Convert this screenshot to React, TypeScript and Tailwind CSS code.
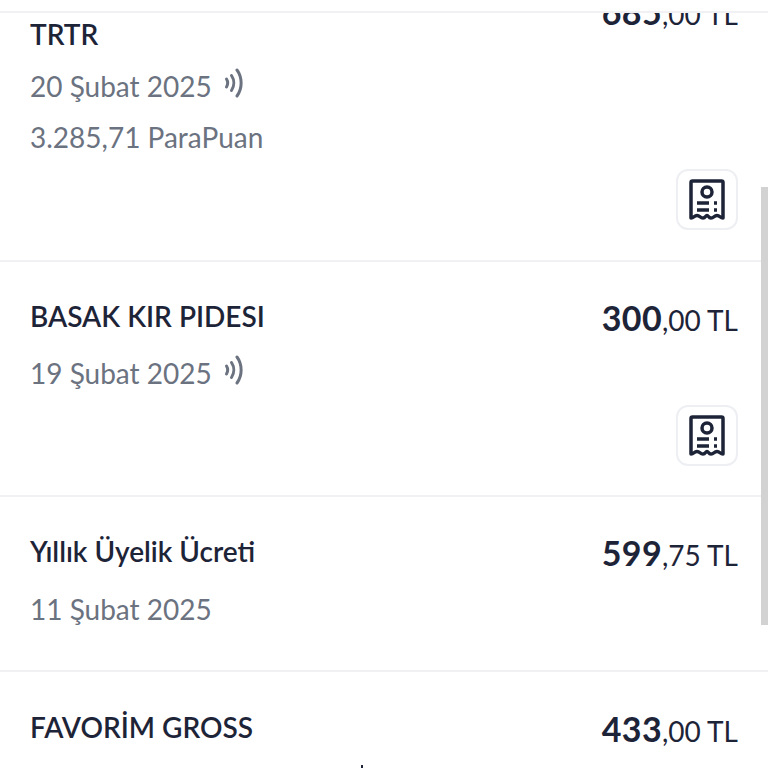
const fontStack = { fontFamily: '"Lato", "Noto Sans", sans-serif' };

function ReceiptIcon() {
  return (
    <svg width="36" height="42" viewBox="0 0 36 42" fill="none" stroke="#1e2438" strokeWidth="3.500">
      <path d="M2 39V3.500A1.500 1.500 0 0 1 3.500 2H32.500A1.500 1.500 0 0 1 34 3.500V39C31 39 31 36.500 28 36.500C25 36.500 25 39 22 39C19.500 39 19.500 36.500 18 36.500C16.500 36.500 16.500 39 14 39C11 39 11 36.500 8 36.500C5 36.500 5 39 2 39Z" strokeLinejoin="round" />
      <circle cx="18" cy="13" r="5" />
      <path d="M8 24H20M25 24H28M8 31H20M25 31H28" />
    </svg>
  );
}

function ContactlessIcon() {
  return (
    <svg width="20" height="30" viewBox="0 0 20 30" fill="none" stroke="#6b7280" strokeWidth="3" strokeLinecap="round">
      <path d="M2.500 11C4 13.500 4 16.500 2.500 19" />
      <path d="M7.500 7.500C10.500 12 10.500 18 7.500 22.500" />
      <path d="M13 2C18.500 9.500 18.500 20.500 13 28" />
    </svg>
  );
}

function ReceiptButton() {
  return (
    <button className="flex h-[61px] w-[62px] items-center justify-center rounded-[12px] border-2 border-[#eeeff3] bg-white">
      <ReceiptIcon />
    </button>
  );
}

function Amount({ whole, cents, className = "" }: { whole: string; cents: string; className?: string }) {
  return (
    <div className={`flex h-[34px] items-baseline text-[#1e2438] ${className}`}>
      <span className="text-[34px] leading-[34px] font-bold tracking-[0.3px]">{whole}</span>
      <span className="text-[28px] leading-[34px]">,{cents} TL</span>
    </div>
  );
}

export default function App() {
  return (
    <div className="relative h-[768px] w-[768px] overflow-hidden bg-white" style={fontStack}>
      {/* top bar */}
      <div className="absolute inset-x-0 top-0 z-10 h-[13px] border-b-2 border-[#f1f1f3] bg-white" />

      {/* scrollbar */}
      <div className="absolute right-0 top-[187px] z-10 h-[438px] w-[7px] bg-[#d2d2d2]" />

      <div className="-mt-[21px] flex flex-col">
        <div className="flex h-[283px] justify-between border-b-2 border-[#f1f1f3] pb-[30px] pl-[30px] pr-[30px] pt-[38px]">
          <div>
            <div className="text-[28px] leading-[34px] font-semibold text-[#1e2438]">TRTR</div>
            <div className="mt-[18px] flex h-[34px] items-center text-[28px] text-[#6b7280]">
              <span>20 Şubat 2025</span>
              <span className="mb-[6px] ml-[12px]"><ContactlessIcon /></span>
            </div>
            <div className="mt-[17px] text-[28px] leading-[34px] text-[#6b7280]">3.285,71 ParaPuan</div>
          </div>
          <div className="flex flex-col items-end justify-between">
            <Amount whole="685" cents="00" className="-mt-[22px]" />
            <ReceiptButton />
          </div>
        </div>

        <div className="flex h-[235px] justify-between border-b-2 border-[#f1f1f3] pb-[29px] pl-[30px] pr-[30px] pt-[37px]">
          <div>
            <div className="text-[28px] leading-[34px] font-semibold text-[#1e2438]">BASAK KIR PIDESI</div>
            <div className="mt-[23px] flex h-[34px] items-center text-[28px] text-[#6b7280]">
              <span>19 Şubat 2025</span>
              <span className="mb-[6px] ml-[12px]"><ContactlessIcon /></span>
            </div>
          </div>
          <div className="flex flex-col items-end justify-between">
            <Amount whole="300" cents="00" className="mt-[2px]" />
            <ReceiptButton />
          </div>
        </div>

        <div className="flex h-[175px] justify-between border-b-2 border-[#f1f1f3] pl-[30px] pr-[30px] pt-[37px]">
          <div>
            <div className="text-[28px] leading-[34px] font-semibold text-[#1e2438]">Yıllık Üyelik Ücreti</div>
            <div className="mt-[24px] text-[28px] leading-[34px] text-[#6b7280]">11 Şubat 2025</div>
          </div>
          <Amount whole="599" cents="75" className="mt-[2px]" />
        </div>

        <div className="flex justify-between pl-[30px] pr-[30px] pt-[38px]">
          <div className="text-[28px] leading-[34px] font-semibold text-[#1e2438]">FAVORİM GROSS</div>
          <Amount whole="433" cents="00" className="mt-[2px]" />
        </div>
      </div>

      {/* tip of the next row, just showing at the bottom edge */}
      <div className="absolute left-[361px] top-[765px] h-[3px] w-[2px] bg-[#1e2438]" />
    </div>
  );
}
